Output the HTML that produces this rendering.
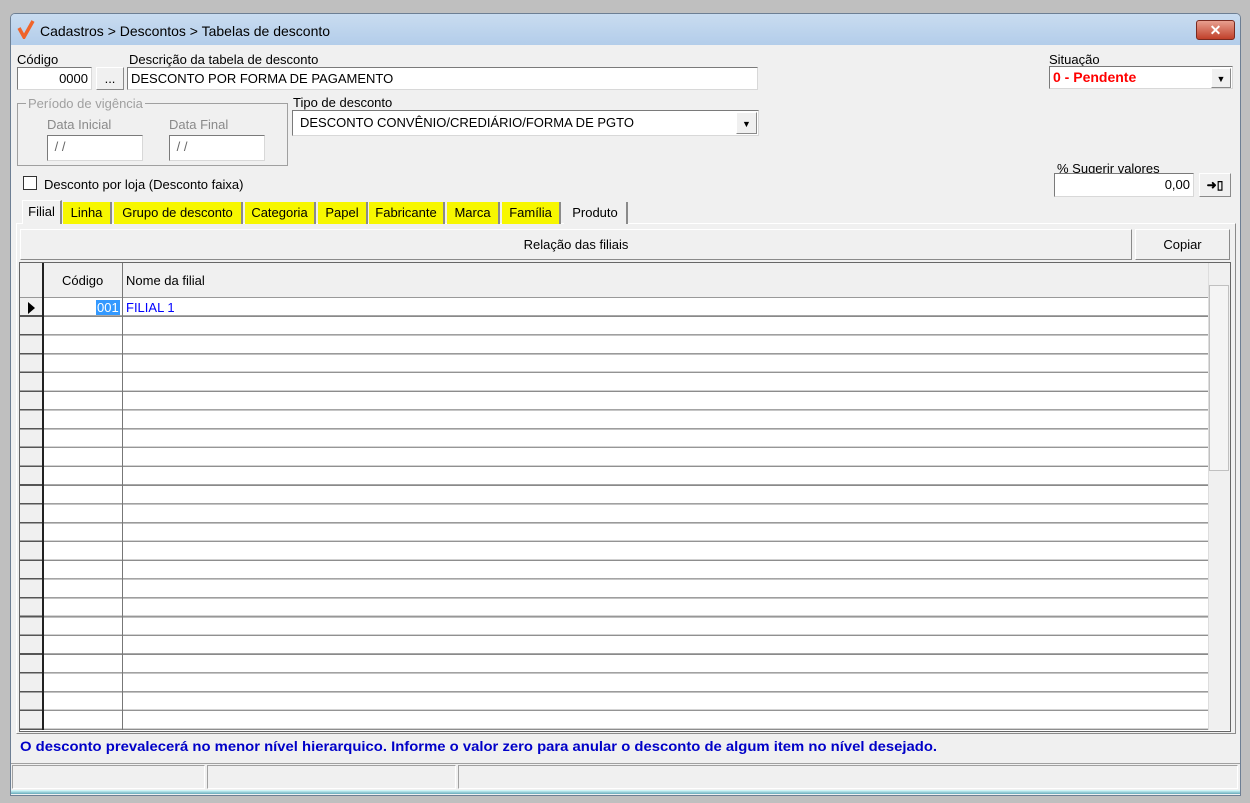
<!DOCTYPE html>
<html><head><meta charset="utf-8"><style>
*{margin:0;padding:0;box-sizing:border-box}
body{width:1250px;height:803px;background:#bfbfbf;font-family:"Liberation Sans",sans-serif;font-size:13px;color:#000;position:relative;overflow:hidden}
.a{position:absolute}
.win{left:10px;top:13px;width:1231px;height:783px;background:#f0f0f0;border:1px solid #6d7f94;border-radius:5px 5px 0 0}
.title{left:11px;top:14px;width:1229px;height:31px;background:linear-gradient(#c9dcf0,#b3cdea);border-radius:4px 4px 0 0}
.inp{background:#fff;border:1px solid #7a7a7a;border-right-color:#d8d8d8;border-bottom-color:#d8d8d8;height:23px;line-height:21px;font-size:13px;padding:0 3px;white-space:nowrap}
.btn{background:#f0f0f0;border:1px solid #fff;border-right-color:#8a8a8a;border-bottom-color:#8a8a8a;text-align:center}
.tab{top:202px;height:22px;line-height:22px;text-align:center;background:#f7f700;border-right:2px solid #8a8a8a;font-size:13px}
.lbl{font-size:13px;white-space:nowrap}
</style></head><body>
<div class="a win"></div>
<div class="a title"></div>
<svg class="a" style="left:17px;top:19px" width="18" height="20"><path d="M2 9 L7 18 L16 2" stroke="#f0642a" stroke-width="3.5" fill="none"/></svg>
<div class="a lbl" style="left:40px;top:23px;font-size:14px">Cadastros &gt; Descontos &gt; Tabelas de desconto</div>
<div class="a" style="left:1196px;top:20px;width:39px;height:20px;background:linear-gradient(#e8a090,#c0402a);border:1px solid #7a2a20;border-radius:3px;color:#fff;text-align:center;font-weight:bold;line-height:18px;font-size:14px">✕</div>

<div class="a lbl" style="left:17px;top:52px">Código</div>
<div class="a inp" style="left:17px;top:67px;width:75px;text-align:right">0000</div>
<div class="a btn" style="left:96px;top:67px;width:28px;height:23px;line-height:22px">...</div>
<div class="a lbl" style="left:129px;top:52px">Descrição da tabela de desconto</div>
<div class="a inp" style="left:127px;top:67px;width:631px">DESCONTO POR FORMA DE PAGAMENTO</div>

<div class="a lbl" style="left:1049px;top:52px">Situação</div>
<div class="a inp" style="left:1049px;top:66px;width:184px;color:#f00;font-weight:bold;font-size:14px">0 - Pendente</div>
<div class="a btn" style="left:1211px;top:68px;width:20px;height:20px;font-size:9px;line-height:20px">▼</div>

<div class="a" style="left:17px;top:103px;width:271px;height:63px;border:1px solid #a0a0a0"></div>
<div class="a lbl" style="left:26px;top:96px;background:#f0f0f0;color:#a0a0a0;padding:0 2px">Período de vigência</div>
<div class="a lbl" style="left:47px;top:117px;color:#8a8a8a">Data Inicial</div>
<div class="a lbl" style="left:169px;top:117px;color:#8a8a8a">Data Final</div>
<div class="a inp" style="left:47px;top:135px;width:96px;height:26px;color:#666">&nbsp;/ /</div>
<div class="a inp" style="left:169px;top:135px;width:96px;height:26px;color:#666">&nbsp;/ /</div>

<div class="a lbl" style="left:293px;top:95px">Tipo de desconto</div>
<div class="a inp" style="left:292px;top:110px;width:467px;height:26px;line-height:24px;padding-left:7px">DESCONTO CONVÊNIO/CREDIÁRIO/FORMA DE PGTO</div>
<div class="a btn" style="left:736px;top:112px;width:21px;height:22px;font-size:9px;line-height:22px">▼</div>

<div class="a" style="left:23px;top:176px;width:14px;height:14px;border:1px solid #333;background:#fff"></div>
<div class="a lbl" style="left:44px;top:177px">Desconto por loja (Desconto faixa)</div>

<div class="a lbl" style="left:1057px;top:161px">% Sugerir valores</div>
<div class="a inp" style="left:1054px;top:173px;width:140px;height:24px;text-align:right">0,00</div>
<div class="a btn" style="left:1199px;top:173px;width:32px;height:24px;line-height:22px;font-size:12px;font-weight:bold">➜▯</div>

<div class="a" style="left:16px;top:223px;width:1220px;height:511px;border:1px solid #fff;border-right-color:#8a8a8a;border-bottom-color:#8a8a8a"></div>
<div class="a tab" style="left:22px;width:40px;background:#f0f0f0;border:1px solid #fff;border-bottom:none;border-right:2px solid #8a8a8a;height:24px;top:200px">Filial</div>
<div class="a tab" style="left:63px;width:49px">Linha</div>
<div class="a tab" style="left:114px;width:129px">Grupo de desconto</div>
<div class="a tab" style="left:245px;width:71px">Categoria</div>
<div class="a tab" style="left:318px;width:50px">Papel</div>
<div class="a tab" style="left:369px;width:76px">Fabricante</div>
<div class="a tab" style="left:447px;width:53px">Marca</div>
<div class="a tab" style="left:502px;width:59px">Família</div>
<div class="a tab" style="left:564px;width:64px;background:#f0f0f0">Produto</div>

<div class="a btn" style="left:20px;top:229px;width:1112px;height:31px;line-height:30px">Relação das filiais</div>
<div class="a btn" style="left:1135px;top:229px;width:95px;height:31px;line-height:30px">Copiar</div>

<div class="a" style="left:19px;top:262px;width:1212px;height:470px;border:1px solid #666;background:#fff"></div>
<div class="a" style="left:20px;top:263px;width:1188px;height:35px;background:#f0f0f0;border-bottom:1px solid #999"></div>
<div class="a" style="left:20px;top:298px;width:1188px;height:432px;background:repeating-linear-gradient(#fff 0,#fff 17.2px,#b0b0b0 17.2px,#808080 18.78px)"></div>
<div class="a" style="left:20px;top:298px;width:23px;height:432px;background:repeating-linear-gradient(#f0f0f0 0,#f0f0f0 17.2px,#555 17.2px,#555 18.78px)"></div>
<div class="a" style="left:42px;top:263px;width:2px;height:467px;background:#222"></div>
<div class="a" style="left:122px;top:263px;width:1px;height:467px;background:#777"></div>
<div class="a lbl" style="left:62px;top:273px">Código</div>
<div class="a lbl" style="left:126px;top:273px">Nome da filial</div>
<div class="a" style="left:28px;top:302px;width:0;height:0;border-left:7px solid #000;border-top:6px solid transparent;border-bottom:6px solid transparent"></div>
<div class="a lbl" style="left:96px;top:300px;background:#3399ff;color:#fff;padding:0 1px">001</div>
<div class="a lbl" style="left:126px;top:300px;color:#0000ff">FILIAL 1</div>
<div class="a" style="left:1208px;top:263px;width:22px;height:467px;background:#f0f0f0;border-left:1px solid #ddd"></div>
<div class="a" style="left:1209px;top:285px;width:20px;height:186px;background:#f4f4f4;border:1px solid #c0c0c0"></div>

<div class="a lbl" style="left:20px;top:738px;color:#0000c8;font-weight:bold;font-size:14px;transform:scaleX(1.06);transform-origin:0 0">O desconto prevalecerá no menor nível hierarquico. Informe o valor zero para anular o desconto de algum item no nível desejado.</div>
<div class="a" style="left:11px;top:763px;width:1229px;height:1px;background:#a0a0a0"></div>
<div class="a" style="left:12px;top:765px;width:193px;height:24px;border:1px solid #a0a0a0;border-right-color:#fff;border-bottom-color:#fff"></div>
<div class="a" style="left:207px;top:765px;width:249px;height:24px;border:1px solid #a0a0a0;border-right-color:#fff;border-bottom-color:#fff"></div>
<div class="a" style="left:458px;top:765px;width:780px;height:24px;border:1px solid #a0a0a0;border-right-color:#fff;border-bottom-color:#fff"></div>
<div class="a" style="left:11px;top:790px;width:1229px;height:4px;background:linear-gradient(#dff,#6ab)"></div>
</body></html>
